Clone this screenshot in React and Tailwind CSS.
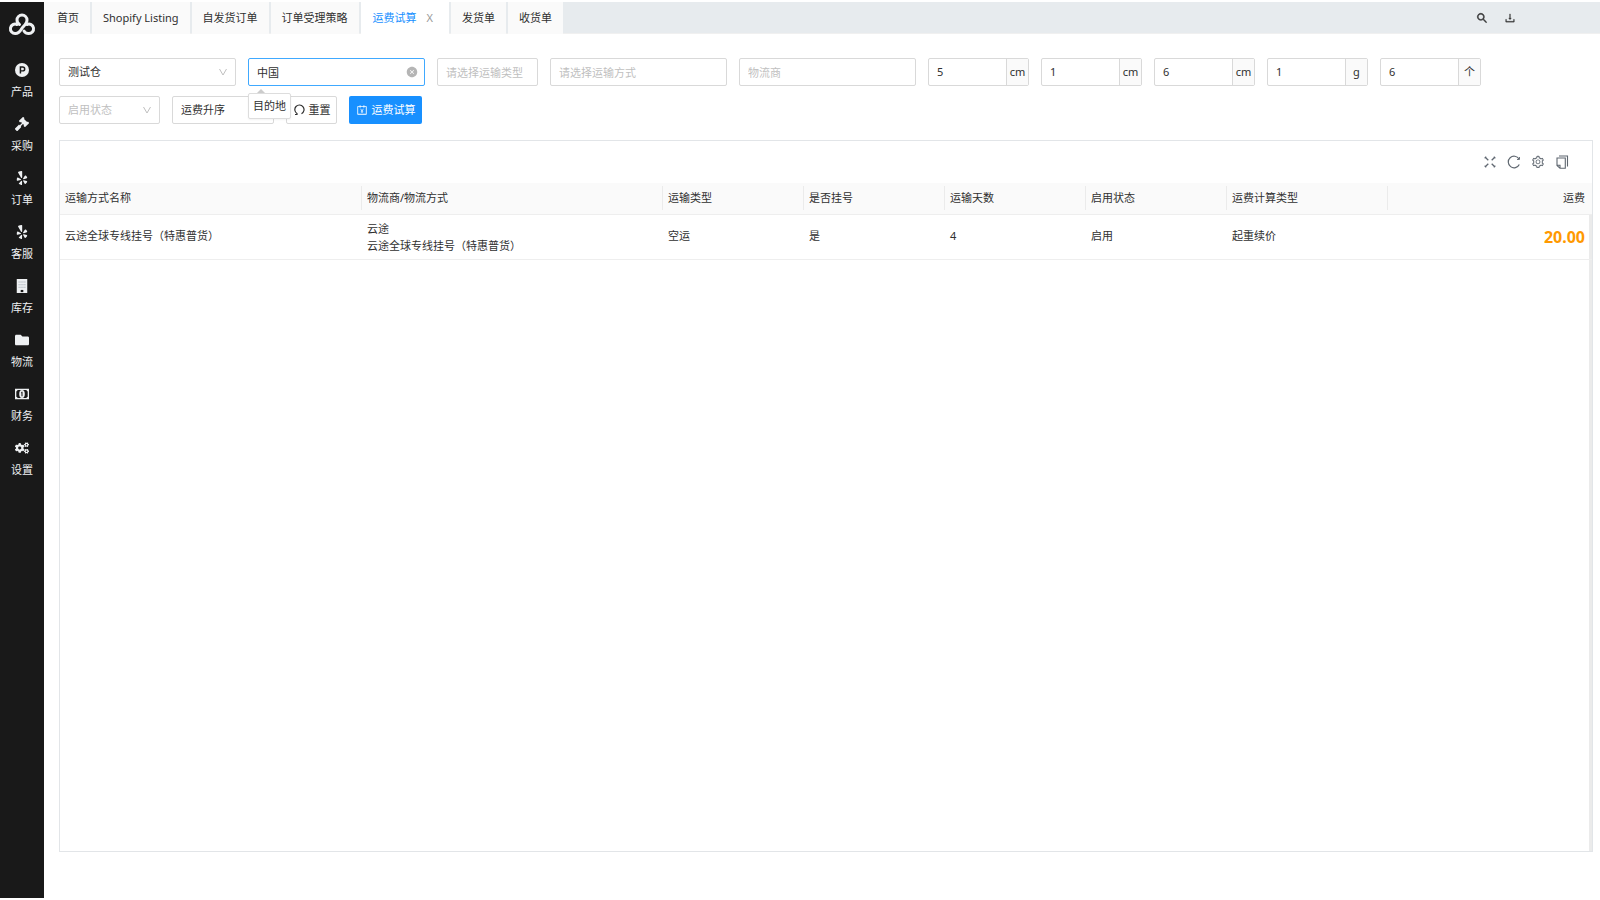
import { AiOutlineAccountBook, AiOutlineDownload, AiOutlineSearch, AiOutlineSetting, AiFillCloseCircle } from 'react-icons/ai';
import { FaCogs, FaFolder, FaGavel, FaYelp } from 'react-icons/fa';

const NAV = [
  { label: '产品', icon: ProductIcon },
  { label: '采购', icon: FaGavel },
  { label: '订单', icon: FaYelp },
  { label: '客服', icon: FaYelp },
  { label: '库存', icon: BuildingIcon },
  { label: '物流', icon: FaFolder },
  { label: '财务', icon: MoneyIcon },
  { label: '设置', icon: FaCogs },
];

const TABS = ['首页', 'Shopify Listing', '自发货订单', '订单受理策略', '运费试算', '发货单', '收货单'];
const ACTIVE_TAB = '运费试算';

const COLUMNS = [
  { title: '运输方式名称', width: 'w-[302px]' },
  { title: '物流商/物流方式', width: 'w-[301px]' },
  { title: '运输类型', width: 'w-[141px]' },
  { title: '是否挂号', width: 'w-[141px]' },
  { title: '运输天数', width: 'w-[141px]' },
  { title: '启用状态', width: 'w-[141px]' },
  { title: '运费计算类型', width: 'w-[161px]' },
];

const ROWS = [
  {
    name: '云途全球专线挂号（特惠普货）',
    carrier: '云途',
    method: '云途全球专线挂号（特惠普货）',
    type: '空运',
    registered: '是',
    days: '4',
    status: '启用',
    calcType: '起重续价',
    fee: '20.00',
  },
];

export default function App() {
  return (
    <div className="flex min-h-screen bg-white py-0.5 font-['Noto_Sans','Noto_Sans_CJK_SC',sans-serif] text-[11px] text-[#303030]">
      <Sidebar />
      <div className="flex min-w-0 flex-1 flex-col">
        <TopBar />
        <main className="flex flex-1 flex-col pt-6 pr-[7px] pb-[46px] pl-[15px]">
          <Filters />
          <ResultPanel />
        </main>
      </div>
    </div>
  );
}

function Sidebar() {
  return (
    <aside className="w-11 shrink-0 bg-[#191919] text-[#eef0f2]">
      <CloudLogo />
      <nav className="mt-[26px] flex flex-col gap-4">
        {NAV.map(({ label, icon: Icon }) => (
          <a key={label} href="#" className="flex flex-col items-center gap-1.5">
            <Icon className="size-4 p-px" />
            <span className="leading-4">{label}</span>
          </a>
        ))}
      </nav>
    </aside>
  );
}

function TopBar() {
  return (
    <header className="flex h-8 items-stretch border-b border-[#f0f0f0] bg-[#e7ebee]">
      <div className="flex gap-0.5">
        {TABS.map((tab, i) => tab === ACTIVE_TAB ? (
          <div key={tab} className="-mb-px flex items-center bg-white pr-4 pl-3">
            <button type="button" className="text-[#1890ff]">{tab}</button>
            <button type="button" aria-label="关闭" className="ml-2.5 text-[#999]">X</button>
          </div>
        ) : (
          <button key={tab} type="button" className={`-mb-px bg-[#fafafa] pr-[11px] ${i === 0 ? 'pl-[13px]' : 'pl-[11px]'}`}>{tab}</button>
        ))}
      </div>
      <div className="ml-auto flex items-center gap-4 pr-[84px] text-[#333]">
        <button type="button" aria-label="搜索"><AiOutlineSearch className="size-3" strokeWidth="50" /></button>
        <button type="button" aria-label="下载"><AiOutlineDownload className="size-3" strokeWidth="20" /></button>
      </div>
    </header>
  );
}

function Filters() {
  return (
    <form className="flex flex-wrap gap-x-3 gap-y-2.5" onSubmit={e => e.preventDefault()}>
      <Select label="仓库" value="测试仓" width="w-[177px]" />
      <div className="relative">
        <input
          aria-label="目的地"
          defaultValue="中国"
          className="h-7 w-[177px] rounded-xs border border-[#40a9ff] px-2 outline-none"
        />
        <button type="button" aria-label="清除" className="absolute top-2 right-[7px] text-[#b5b5b5]">
          <AiFillCloseCircle className="size-3" />
        </button>
        <div role="tooltip" className="absolute top-[35px] left-0 z-10 rounded-xs border border-[#ddd] bg-white p-1 leading-4 whitespace-nowrap shadow-xs">
          <span className="absolute -top-[5px] left-2 border-x-4 border-b-4 border-x-transparent border-b-[#ccc]" />
          目的地
        </div>
      </div>
      <TextBox placeholder="请选择运输类型" width="w-[101px]" />
      <TextBox placeholder="请选择运输方式" width="w-[177px]" />
      <TextBox placeholder="物流商" width="w-[177px]" />
      <UnitBox label="长" value="5" unit="cm" />
      <UnitBox label="宽" value="1" unit="cm" />
      <UnitBox label="高" value="6" unit="cm" />
      <UnitBox label="重量" value="1" unit="g" />
      <UnitBox label="数量" value="6" unit="个" />
      <div className="flex w-full gap-3">
        <Select label="启用状态" value="启用状态" width="w-[101px]" muted />
        <Select label="排序" value="运费升序" width="w-[102px]" />
        <button type="reset" className="flex h-7 w-[51px] items-center justify-center gap-1 rounded-xs border border-[#d9d9d9]">
          <ResetIcon className="size-3" />
          重置
        </button>
        <button type="submit" className="flex h-7 w-[73px] items-center justify-center gap-1 rounded-xs bg-[#1890ff] text-white">
          <AiOutlineAccountBook className="size-3" />
          运费试算
        </button>
      </div>
    </form>
  );
}

function Select({ label, value, width, muted }) {
  return (
    <div className={`relative ${width}`}>
      <select
        aria-label={label}
        className={`h-7 w-full appearance-none rounded-xs border border-[#d9d9d9] bg-white px-2 outline-none ${muted ? 'text-[#bfbfbf]' : ''}`}
      >
        <option>{value}</option>
      </select>
      <svg viewBox="0 0 10 10" className="pointer-events-none absolute top-[9px] right-2 size-2.5 text-[#bfbfbf]" fill="none" stroke="currentColor">
        <path d="M1.5 2 5 8l3.5-6" />
      </svg>
    </div>
  );
}

function TextBox({ placeholder, width }) {
  return (
    <input
      aria-label={placeholder}
      placeholder={placeholder}
      className={`h-7 rounded-xs border border-[#d9d9d9] px-2 outline-none placeholder:text-[#bfbfbf] ${width}`}
    />
  );
}

function UnitBox({ label, value, unit }) {
  return (
    <label className="flex h-7 w-[101px] rounded-xs border border-[#d9d9d9]">
      <input aria-label={label} defaultValue={value} className="min-w-0 flex-1 px-2 outline-none" />
      <span className="flex w-[22px] items-center justify-center border-l border-[#d9d9d9] bg-[#fafafa]">{unit}</span>
    </label>
  );
}

function ResultPanel() {
  return (
    <section className="mt-4 flex flex-1 flex-col border border-[#e2e5e8]">
      <div className="flex h-[42px] items-center justify-end gap-2.5 pr-[23px] text-[#5f6770]">
        <button type="button" aria-label="全屏"><ExpandIcon className="size-3.5" /></button>
        <button type="button" aria-label="刷新"><RefreshIcon className="size-3.5" /></button>
        <button type="button" aria-label="列设置"><AiOutlineSetting className="size-3.5" /></button>
        <button type="button" aria-label="复制"><CopyIcon className="size-3.5" /></button>
      </div>
      <table className="w-full table-fixed border-collapse text-left">
        <thead className="bg-[#fafafa]">
          <tr className="h-[31px] border-b border-[#eee]">
            {COLUMNS.map(col => (
              <th key={col.title} className={`p-0 font-normal ${col.width}`}>
                <div className="border-r border-[#ebebeb] px-[5px] leading-6">{col.title}</div>
              </th>
            ))}
            <th className="pr-[7px] text-right font-normal">运费</th>
          </tr>
        </thead>
        <tbody>
          {ROWS.map(row => (
            <tr key={row.name} className="h-[45px] border-b border-[#eee]">
              <td className="px-[5px]">{row.name}</td>
              <td className="px-[5px] leading-[17px]">
                <div>{row.carrier}</div>
                <div>{row.method}</div>
              </td>
              <td className="px-[5px]">{row.type}</td>
              <td className="px-[5px]">{row.registered}</td>
              <td className="px-[5px]">{row.days}</td>
              <td className="px-[5px]">{row.status}</td>
              <td className="px-[5px]">{row.calcType}</td>
              <td className="p-0">
                <div className="flex h-11 items-center justify-end border-r-[3px] border-[#ebebeb] pr-1 text-base font-bold text-[#ff9900]">
                  {row.fee}
                </div>
              </td>
            </tr>
          ))}
        </tbody>
      </table>
      <div className="flex-1 border-r-[3px] border-[#ebebeb]" />
    </section>
  );
}

function CloudLogo() {
  return (
    <svg viewBox="0 0 28 24" className="mx-auto mt-2.5 h-6 w-7" fill="none" stroke="currentColor" strokeWidth="3" strokeLinecap="round" strokeLinejoin="round">
      <path d="M9 12.500A4.700 4.700 0 1 0 7.500 21.500c3 0 4.500-2 6-4.500 1.500-2.500 5.500-5 5.500-9A5 5 0 0 0 9 8c0 2 1 3.500 2.500 4.500" />
      <path d="M19 12.500a4.700 4.700 0 1 1 1.500 9c-2 0-3.500-1-4.500-2.500" />
    </svg>
  );
}

function ProductIcon({ className }) {
  return (
    <svg viewBox="0 0 16 16" className={className}>
      <circle cx="8" cy="8" r="8" fill="currentColor" />
      <path d="M6.200 12V4.500h2.600a2.200 2.200 0 0 1 0 4.500H6.200" fill="none" stroke="#191919" strokeWidth="1.700" />
    </svg>
  );
}

function BuildingIcon({ className }) {
  return (
    <svg viewBox="0 0 16 16" className={className}>
      <path d="M2 0h12v16H2z" fill="currentColor" />
      <path d="M4 3.500h8M4 6.500h8M4 9.500h8" stroke="#a9b0b8" strokeWidth="1.200" strokeDasharray="1.400 .8" />
      <path d="M6.500 12.500h3V15h-3z" fill="#191919" />
    </svg>
  );
}

function MoneyIcon({ className }) {
  return (
    <svg viewBox="0 0 16 16" className={className}>
      <path d="M0 2h16v12H0z" fill="currentColor" />
      <path d="M3 3.500h10a2 2 0 0 0 1.500 1.500v6a2 2 0 0 0-1.500 1.500H3A2 2 0 0 0 1.500 11V5A2 2 0 0 0 3 3.500z" fill="#191919" />
      <ellipse cx="8" cy="8" rx="3.200" ry="4.500" fill="currentColor" />
      <path d="M8 5.500v5M7 6.500h1" stroke="#191919" strokeWidth="1.200" />
    </svg>
  );
}

function ResetIcon({ className }) {
  return (
    <svg viewBox="0 0 12 12" className={className} fill="none" stroke="currentColor" strokeWidth="1.200">
      <path d="M2 10.500h2v-1A4.600 4.600 0 1 1 8.500 9.700" />
    </svg>
  );
}

function ExpandIcon({ className }) {
  return (
    <svg viewBox="0 0 14 14" className={className} fill="none" stroke="currentColor" strokeWidth="1.300">
      <path d="M2 2l3.300 3.300M12 2 8.700 5.300M2 12l3.300-3.300M12 12 8.700 8.700" />
      <path d="M2 3.800V2h1.500M12 3.800V2h-1.500M2 10.200V12h1.500M12 10.200V12h-1.500" strokeWidth=".5" />
    </svg>
  );
}

function RefreshIcon({ className }) {
  return (
    <svg viewBox="0 0 14 14" className={className} fill="none" stroke="currentColor" strokeWidth="1.200">
      <path d="M12.300 9.500a5.800 5.800 0 1 1-.3-5.600" />
      <path d="M12.500 2v2.500H10" strokeWidth=".9" />
    </svg>
  );
}

function CopyIcon({ className }) {
  return (
    <svg viewBox="0 0 14 14" className={className} fill="none" stroke="currentColor" strokeWidth="1.100">
      <path d="M4 1h8.500v10.500M2 3h8.300v10.300H5L2 10.500zM2 10.300h3v3" />
    </svg>
  );
}
